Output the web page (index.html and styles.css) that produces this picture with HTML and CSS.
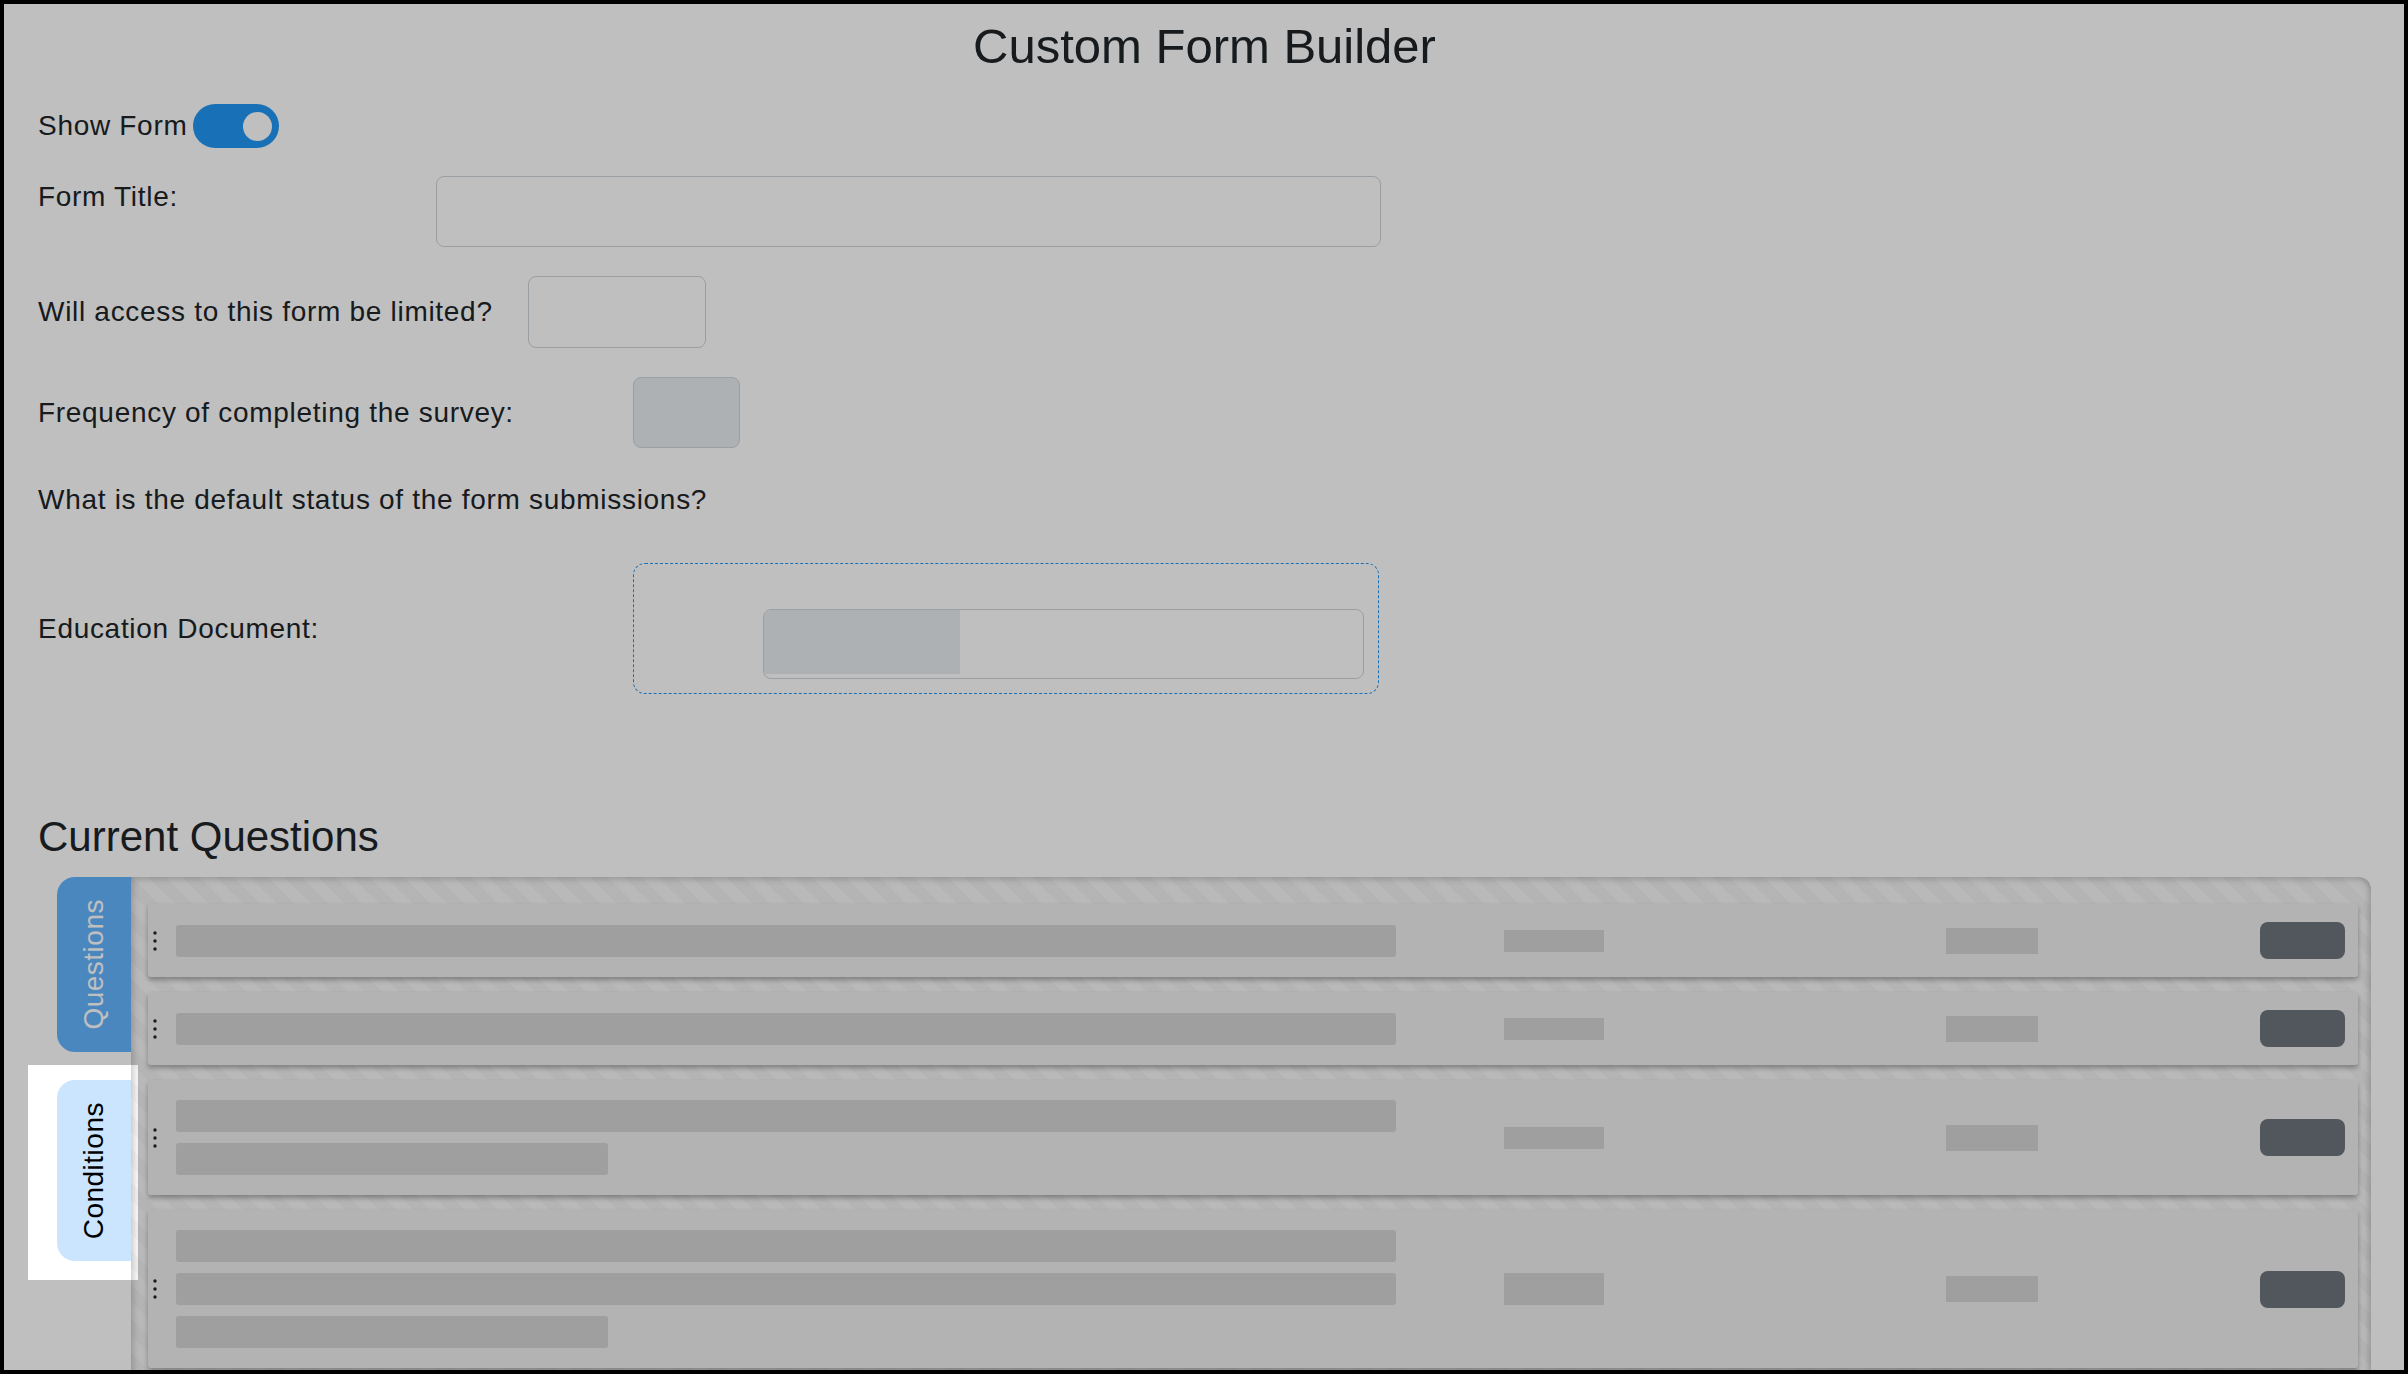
FILE: index.html
```html
<!DOCTYPE html>
<html lang="en">
<head>
    <meta charset="UTF-8">
    <meta name="viewport" content="width=device-width, initial-scale=1.0">
    <title>Custom Form Builder</title>
    <link rel="stylesheet" href="styles.css">
</head>

<body>
<div class="frame">
    <div class="page">
        <h1 class="page-title">Custom Form Builder</h1>

        <!-- show / hide toggle -->
        <div class="switch-row">
            <span>Show Form</span>
            <span class="switch"><span class="knob"></span></span>
        </div>

        <div class="field field-top">
            <label class="field-label label-title">Form Title:</label>
            <input type="text" class="input input-title">
        </div>

        <div class="field">
            <label class="field-label label-access">Will access to this form be limited?</label>
            <input type="text" class="input input-access">
        </div>

        <div class="field">
            <label class="field-label label-wide">Frequency of completing the survey:</label>
            <input type="text" class="input input-frequency" disabled>
        </div>

        <div class="field field-status">
            <label class="field-label">What is the default status of the form submissions?</label>
        </div>

        <div class="field field-upload">
            <label class="field-label label-wide">Education Document:</label>
            <div class="dropzone">
                <div class="file-input"><span class="file-button"></span></div>
            </div>
        </div>

        <h2 class="section-title">Current Questions</h2>

        <div class="questions">
            <div class="tabs">
                <div class="tab tab-active"><span class="tab-text">Questions</span></div>
                <div class="tab">
                    <span class="tab-text">Conditions</span>
                    <!-- tour highlight -->
                    <span class="spotlight"></span>
                </div>
            </div>

            <div class="question-list">
                <div class="question">
                    <svg class="handle" width="4" height="20" viewBox="0 0 4 20"><circle cx="2" cy="2" r="1.7"/><circle cx="2" cy="10" r="1.7"/><circle cx="2" cy="18" r="1.7"/></svg>
                    <div class="q-main">
                        <div class="sk"></div>
                    </div>
                    <div class="q-type"><div class="sk sk-type"></div></div>
                    <div class="q-req"><div class="sk sk-req"></div></div>
                    <div class="q-btn"></div>
                </div>

                <div class="question">
                    <svg class="handle" width="4" height="20" viewBox="0 0 4 20"><circle cx="2" cy="2" r="1.7"/><circle cx="2" cy="10" r="1.7"/><circle cx="2" cy="18" r="1.7"/></svg>
                    <div class="q-main">
                        <div class="sk"></div>
                    </div>
                    <div class="q-type"><div class="sk sk-type"></div></div>
                    <div class="q-req"><div class="sk sk-req"></div></div>
                    <div class="q-btn"></div>
                </div>

                <div class="question">
                    <svg class="handle" width="4" height="20" viewBox="0 0 4 20"><circle cx="2" cy="2" r="1.7"/><circle cx="2" cy="10" r="1.7"/><circle cx="2" cy="18" r="1.7"/></svg>
                    <div class="q-main">
                        <div class="sk"></div>
                        <div class="sk sk-short"></div>
                    </div>
                    <div class="q-type"><div class="sk sk-type"></div></div>
                    <div class="q-req"><div class="sk sk-req"></div></div>
                    <div class="q-btn"></div>
                </div>

                <div class="question">
                    <svg class="handle" width="4" height="20" viewBox="0 0 4 20"><circle cx="2" cy="2" r="1.7"/><circle cx="2" cy="10" r="1.7"/><circle cx="2" cy="18" r="1.7"/></svg>
                    <div class="q-main">
                        <div class="sk"></div>
                        <div class="sk"></div>
                        <div class="sk sk-short"></div>
                    </div>
                    <div class="q-type"><div class="sk sk-type sk-tall"></div></div>
                    <div class="q-req"><div class="sk sk-req"></div></div>
                    <div class="q-btn"></div>
                </div>
            </div>
        </div>
    </div>
</div>
</body>
</html>
```

FILE: styles.css
```css
body {
    margin: 0;
    font-family: "Liberation Sans", Arial, sans-serif;
    font-size: 28px;
    line-height: 1.5;
    letter-spacing: 0.7px;
    color: #212529;
    background: #fff;
}

/* screenshot frame */
.frame {
    height: 100vh;
    box-sizing: border-box;
    border: 4px solid #000;
    overflow: hidden;
}

.page {
    padding: 13px 33px 0 34px;
}

.page-title {
    margin: 0;
    font-size: 49px;
    line-height: 59px;
    font-weight: 500;
    letter-spacing: 0;
    text-align: center;
}

/* toggle */
.switch-row {
    display: flex;
    align-items: center;
    gap: 6px;
    height: 44px;
    margin-top: 28px;
}

.switch {
    display: flex;
    align-items: center;
    justify-content: flex-end;
    width: 86px;
    height: 44px;
    box-sizing: border-box;
    padding: 0 7px;
    border-radius: 22px;
    background: #2196f3;
}

.knob {
    width: 29px;
    height: 29px;
    border-radius: 50%;
    background: #fff;
}

/* form rows */
.field {
    display: flex;
    align-items: center;
    margin-top: 29px;
}

.field-top {
    align-items: flex-start;
    margin-top: 28px;
}

.field-status {
    margin-top: 31px;
}

.field-upload {
    margin-top: 42px;
}

.field-label {
    flex-shrink: 0;
}

.label-title { width: 398px; }
.label-access { width: 490px; }
.label-wide { width: 595px; }

.input {
    box-sizing: border-box;
    height: 71px;
    border: 1px solid #ced4da;
    border-radius: 8px;
    background: #fff;
    font: inherit;
    padding: 0 16px;
}

.input-title { width: 945px; }
.input-access { width: 178px; height: 72px; }
.input-frequency { width: 107px; background: #e9ecef; }

.dropzone {
    display: flex;
    justify-content: flex-end;
    align-items: flex-end;
    width: 746px;
    height: 131px;
    box-sizing: border-box;
    padding: 0 14px 14px 0;
    border: 1px dashed #2196f3;
    border-radius: 12px;
}

.file-input {
    width: 601px;
    height: 70px;
    box-sizing: border-box;
    border: 1px solid #ced4da;
    border-radius: 8px;
    background: #fff;
    overflow: hidden;
}

.file-button {
    display: block;
    width: 196px;
    height: 64px;
    background: #e9ecef;
}

.section-title {
    margin: 118px 0 0;
    font-size: 42px;
    line-height: 50px;
    font-weight: 500;
    letter-spacing: 0;
}

/* questions panel */
.questions {
    display: flex;
    margin: 15px 0 0 19px;
}

.tabs {
    display: flex;
    flex-direction: column;
    gap: 28px;
    width: 74px;
    flex-shrink: 0;
}

.tab {
    position: relative;
    display: flex;
    justify-content: center;
    padding: 22px 16px;
    line-height: 42px;
    letter-spacing: 0.5px;
    border-radius: 18px 0 0 18px;
    background: #cce5ff;
    color: #000;
}

.tab-active {
    background: #63b4ff;
    color: #fff;
}

.tab-text {
    display: block;
    writing-mode: vertical-rl;
    transform: rotate(180deg);
}

.spotlight {
    position: absolute;
    top: -15px;
    left: -29px;
    right: -7px;
    bottom: -19px;
    box-shadow: 0 0 0 3000px rgba(0, 0, 0, 0.25);
    pointer-events: none;
    z-index: 10;
}

.question-list {
    flex: 1;
    min-height: 600px;
    padding: 27px 13px 0 17px;
    border-radius: 0 12px 0 0;
    background-color: #f1f1f1;
    background-image: linear-gradient(45deg, rgba(255, 255, 255, 0.45) 25%, transparent 25%, transparent 50%, rgba(255, 255, 255, 0.45) 50%, rgba(255, 255, 255, 0.45) 75%, transparent 75%, transparent);
    background-size: 34px 34px;
    box-shadow: inset 0 0 8px rgba(0, 0, 0, 0.3);
}

.question {
    display: flex;
    align-items: center;
    padding: 18px 13px 18px 5px;
    margin-bottom: 15px;
    border-radius: 3px;
    background: #efefef;
    box-shadow: 0 3px 5px rgba(0, 0, 0, 0.3);
}

.handle {
    flex-shrink: 0;
    margin-right: 19px;
    fill: #212529;
}

.q-main {
    display: flex;
    flex-direction: column;
    gap: 11px;
    width: 1220px;
    padding: 2px 0;
}

.sk {
    height: 32px;
    border-radius: 3px;
    background: #d5d5d5;
}

.sk-short { width: 432px; }

.q-type { margin-left: 108px; width: 100px; }
.sk-type { height: 22px; border-radius: 0; }
.sk-tall { height: 32px; }

.q-req { margin-left: 342px; width: 92px; }
.sk-req { height: 26px; border-radius: 0; }

.q-btn {
    margin-left: auto;
    width: 85px;
    height: 37px;
    border-radius: 8px;
    background: #6c757d;
}
```
